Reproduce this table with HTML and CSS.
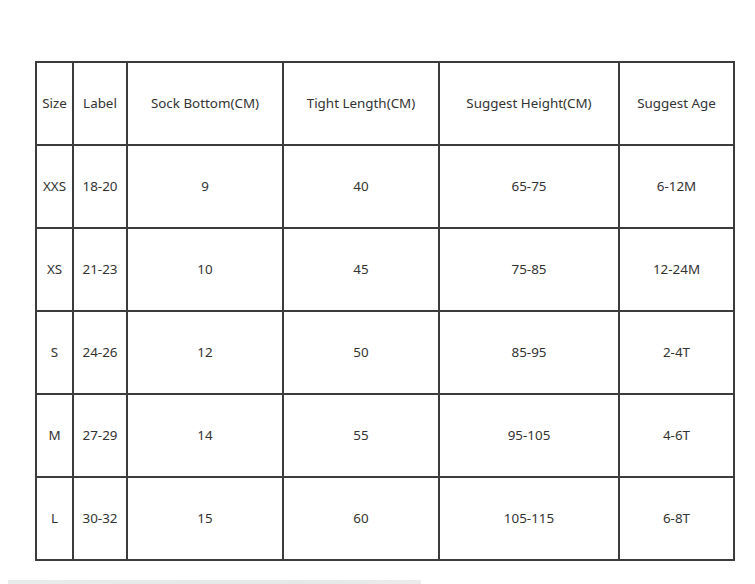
FILE: index.html
```html
<!DOCTYPE html>
<html>
<head>
<meta charset="utf-8">
<link rel="stylesheet" href="styles.css">
</head>
<body>
<div class="page">
  <div class="grid">
    <div class="cell">Size</div><div class="cell">Label</div><div class="cell">Sock Bottom(CM)</div><div class="cell">Tight Length(CM)</div><div class="cell">Suggest Height(CM)</div><div class="cell">Suggest Age</div>
    <div class="cell">XXS</div><div class="cell">18-20</div><div class="cell">9</div><div class="cell">40</div><div class="cell">65-75</div><div class="cell">6-12M</div>
    <div class="cell">XS</div><div class="cell">21-23</div><div class="cell">10</div><div class="cell">45</div><div class="cell">75-85</div><div class="cell">12-24M</div>
    <div class="cell">S</div><div class="cell">24-26</div><div class="cell">12</div><div class="cell">50</div><div class="cell">85-95</div><div class="cell">2-4T</div>
    <div class="cell">M</div><div class="cell">27-29</div><div class="cell">14</div><div class="cell">55</div><div class="cell">95-105</div><div class="cell">4-6T</div>
    <div class="cell">L</div><div class="cell">30-32</div><div class="cell">15</div><div class="cell">60</div><div class="cell">105-115</div><div class="cell">6-8T</div>
  </div>
  <div class="strip"></div>
</div>
</body>
</html>
```
FILE: styles.css
```css
html, body {
  margin: 0;
  padding: 0;
  background: #ffffff;
}
.page {
  width: 755px;
  height: 584px;
  overflow: hidden;
  padding-top: 61px;
  box-sizing: border-box;
}
.grid {
  margin-left: 35px;
  width: 700px;
  box-sizing: border-box;
  display: grid;
  grid-template-columns: 35px 52px 154px 154px 178px 113px;
  grid-template-rows: repeat(6, 81px);
  gap: 2px;
  padding: 2px;
  background: #3c3c3c;
}
.cell {
  background: #ffffff;
  display: flex;
  align-items: center;
  justify-content: center;
  padding-bottom: 1px;
  box-sizing: border-box;
  font-family: "Noto Sans", sans-serif;
  font-size: 13.4px;
  color: #333333;
  white-space: nowrap;
}
.strip {
  margin-top: 19px;
  margin-left: 8px;
  width: 413px;
  height: 4px;
  background: linear-gradient(90deg, #e9ecea, #e4e8e6 70%, #ececec);
}
```
